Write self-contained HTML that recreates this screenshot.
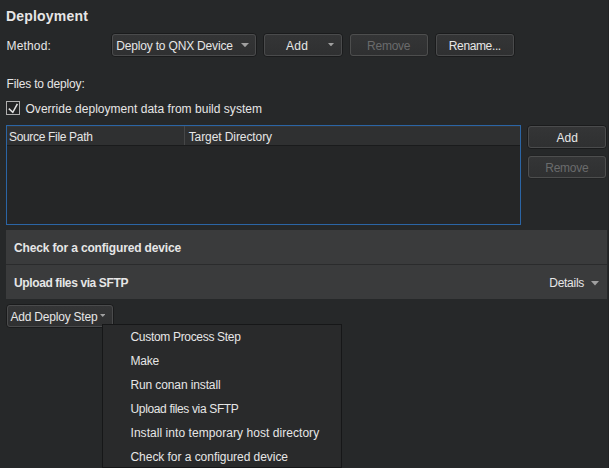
<!DOCTYPE html>
<html><head><meta charset="utf-8"><title>Deployment</title>
<style>
html,body{margin:0;padding:0;background:#262829;}
body{width:609px;height:468px;position:relative;overflow:hidden;font-family:"Liberation Sans",sans-serif;font-size:12px;color:#e6e6e6;}
.t{position:absolute;white-space:nowrap;line-height:normal;}
.b{position:absolute;box-sizing:border-box;}
.btn{position:absolute;box-sizing:border-box;border:1px solid #1a1b1c;border-radius:4px;background:#323334;}
.btn::before{content:"";position:absolute;left:0;top:0;right:0;bottom:0;box-sizing:border-box;border:1px solid #4a4b4c;border-radius:3px;background:linear-gradient(#343536,#2f3031);}
.btn.dis{border-color:#222324;}
.btn.dis::before{border-color:#4d4e4e;}
</style></head><body>
<span class="t" style="left:6px;top:8.11px;font-size:14px;color:#e6e6e6;font-weight:bold;letter-spacing:0.186px;">Deployment</span>
<span class="t" style="left:6.5px;top:38.95px;font-size:12px;color:#e6e6e6;letter-spacing:0.163px;">Method:</span>
<div class="btn" style="left:111px;top:33px;width:146px;height:24px"></div>
<span class="t" style="left:116.3px;top:38.95px;font-size:12px;color:#e6e6e6;letter-spacing:-0.182px;">Deploy to QNX Device</span>
<svg class="b" style="left:241.2px;top:43px" width="8.0" height="4.200000000000003" viewBox="0 0 8.0 4.200000000000003"><polygon points="0,0 8.0,0 4.0,4.200000000000003" fill="#a0a0a0"/></svg>
<div class="btn" style="left:263px;top:33px;width:80px;height:24px"></div>
<span class="t" style="left:286px;top:38.95px;font-size:12px;color:#e6e6e6;letter-spacing:0.247px;">Add</span>
<svg class="b" style="left:328px;top:43px" width="6" height="3.3999999999999986" viewBox="0 0 6 3.3999999999999986"><polygon points="0,0 6,0 3.0,3.3999999999999986" fill="#a0a0a0"/></svg>
<div class="btn dis" style="left:349px;top:33px;width:80px;height:24px"></div>
<span class="t" style="left:367px;top:38.95px;font-size:12px;color:#6a6b6c;letter-spacing:-0.232px;">Remove</span>
<div class="btn" style="left:435px;top:33px;width:80px;height:24px"></div>
<span class="t" style="left:448.8px;top:38.95px;font-size:12px;color:#e6e6e6;letter-spacing:-0.373px;">Rename...</span>
<span class="t" style="left:6.5px;top:76.95px;font-size:12px;color:#e6e6e6;letter-spacing:-0.164px;">Files to deploy:</span>
<div class="b" style="left:6px;top:101px;width:14px;height:14px;border:1px solid #b0b0b0;background:#232425"></div>
<svg class="b" style="left:6px;top:101px" width="14" height="14" viewBox="0 0 14 14"><path d="M2.8 7.6 L6.8 11.3 L11.4 2.8" fill="none" stroke="#e0e0e0" stroke-width="1.5"/></svg>
<span class="t" style="left:25.5px;top:101.95px;font-size:12px;color:#e6e6e6;letter-spacing:0.025px;">Override deployment data from build system</span>
<div class="b" style="left:6px;top:125px;width:515px;height:100px;border:1px solid #2b65a5;background:#252627"></div>
<div class="b" style="left:7px;top:126px;width:513px;height:20px;background:#2f3031;border-top:1px solid #363636;border-bottom:1px solid #1a1b1c"></div>
<div class="b" style="left:184px;top:126px;width:1px;height:19px;background:#464748"></div>
<span class="t" style="left:9px;top:129.95px;font-size:12px;color:#e6e6e6;letter-spacing:-0.326px;">Source File Path</span>
<span class="t" style="left:188.7px;top:129.95px;font-size:12px;color:#e6e6e6;letter-spacing:-0.088px;">Target Directory</span>
<div class="btn" style="left:527px;top:125px;width:80px;height:24px"></div>
<span class="t" style="left:556.4px;top:130.95px;font-size:12px;color:#e6e6e6;letter-spacing:0.147px;">Add</span>
<div class="btn dis" style="left:527px;top:155px;width:80px;height:24px"></div>
<span class="t" style="left:545.3px;top:160.95px;font-size:12px;color:#6a6b6c;letter-spacing:-0.282px;">Remove</span>
<div class="b" style="left:608px;top:0;width:1px;height:468px;background:#222324"></div>
<div class="b" style="left:6px;top:230px;width:601px;height:69px;background:#3a3b3c"></div>
<div class="b" style="left:6px;top:264px;width:601px;height:1px;background:#2a2b2c"></div>
<span class="t" style="left:14px;top:240.95px;font-size:12px;color:#e6e6e6;font-weight:bold;letter-spacing:-0.151px;">Check for a configured device</span>
<span class="t" style="left:14px;top:275.95px;font-size:12px;color:#e6e6e6;font-weight:bold;letter-spacing:-0.382px;">Upload files via SFTP</span>
<span class="t" style="left:549.3px;top:275.95px;font-size:12px;color:#e6e6e6;letter-spacing:-0.284px;">Details</span>
<svg class="b" style="left:590.5px;top:281.3px" width="8.0" height="4.5" viewBox="0 0 8.0 4.5"><polygon points="0,0 8.0,0 4.0,4.5" fill="#a0a0a0"/></svg>
<div class="btn" style="left:6px;top:304px;width:108px;height:24px"></div>
<span class="t" style="left:10.5px;top:309.95px;font-size:12px;color:#e6e6e6;letter-spacing:-0.211px;">Add Deploy Step</span>
<svg class="b" style="left:99.5px;top:314.3px" width="5.5" height="2.8999999999999773" viewBox="0 0 5.5 2.8999999999999773"><polygon points="0,0 5.5,0 2.75,2.8999999999999773" fill="#a0a0a0"/></svg>
<div class="b" style="left:102px;top:324px;width:240px;height:144px;border:1px solid #161718;background:#292a2b"></div>
<span class="t" style="left:130.5px;top:329.95px;font-size:12px;color:#e6e6e6;letter-spacing:-0.318px;">Custom Process Step</span>
<span class="t" style="left:130.5px;top:353.95px;font-size:12px;color:#e6e6e6;letter-spacing:-0.185px;">Make</span>
<span class="t" style="left:130.5px;top:377.95px;font-size:12px;color:#e6e6e6;letter-spacing:-0.121px;">Run conan install</span>
<span class="t" style="left:130.5px;top:401.95px;font-size:12px;color:#e6e6e6;letter-spacing:-0.352px;">Upload files via SFTP</span>
<span class="t" style="left:130.5px;top:425.95px;font-size:12px;color:#e6e6e6;letter-spacing:0.053px;">Install into temporary host directory</span>
<span class="t" style="left:130.5px;top:449.95px;font-size:12px;color:#e6e6e6;letter-spacing:-0.044px;">Check for a configured device</span>
</body></html>
